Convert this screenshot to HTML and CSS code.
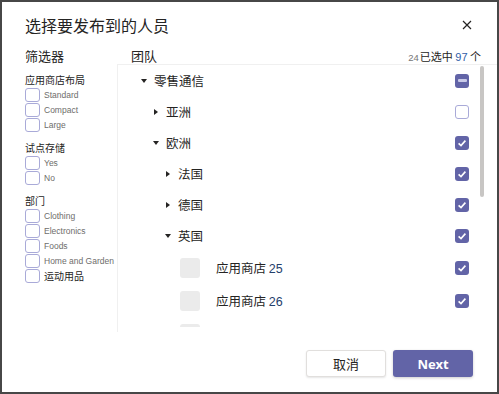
FILE: index.html
```html
<!DOCTYPE html>
<html lang="zh-CN">

<head>
   <meta charset="UTF-8">
   <meta name="viewport" content="width=device-width, initial-scale=1.0">
   <title>选择要发布到的人员</title>
   <link rel="stylesheet" href="styles.css">
</head>

<body>
   <div class="dialog">
      <div class="dialog-header">
         <h1 class="dialog-title">选择要发布到的人员</h1>
         <button class="close-btn" aria-label="关闭">
            <svg width="10" height="10" viewBox="0 0 10 10">
               <path d="M1 1 L9 9 M9 1 L1 9" stroke="#252423" stroke-width="1.2" fill="none" />
            </svg>
         </button>
      </div>

      <div class="dialog-body">
         <!-- Filters column -->
         <div class="filters">
            <div class="col-heading">筛选器</div>

            <div class="filter-group">
               <div class="group-title">应用商店布局</div>
               <label class="filter-row"><span class="box"></span>Standard</label>
               <label class="filter-row"><span class="box"></span>Compact</label>
               <label class="filter-row"><span class="box"></span>Large</label>
            </div>

            <div class="filter-group">
               <div class="group-title">试点存储</div>
               <label class="filter-row"><span class="box"></span>Yes</label>
               <label class="filter-row"><span class="box"></span>No</label>
            </div>

            <div class="filter-group">
               <div class="group-title">部门</div>
               <label class="filter-row"><span class="box"></span>Clothing</label>
               <label class="filter-row"><span class="box"></span>Electronics</label>
               <label class="filter-row"><span class="box"></span>Foods</label>
               <label class="filter-row"><span class="box"></span>Home and Garden</label>
               <label class="filter-row cjk"><span class="box"></span>运动用品</label>
            </div>
         </div>

         <!-- Teams column -->
         <div class="teams">
            <div class="teams-heading">
               <span class="col-heading">团队</span>
               <span class="counter"><span class="count-sel">24</span>已选中 <span class="count-all">97</span> 个</span>
            </div>

            <div class="tree-wrap">
               <div class="tree">
                  <div class="scrollbar"></div>

                  <div class="tree-row lvl-0">
                     <span class="caret down"></span><span class="name">零售通信</span>
                     <span class="check mixed"><span class="dash"></span></span>
                  </div>
                  <div class="tree-row lvl-1">
                     <span class="caret right"></span><span class="name">亚洲</span>
                     <span class="check"></span>
                  </div>
                  <div class="tree-row lvl-1">
                     <span class="caret down"></span><span class="name">欧洲</span>
                     <span class="check on"><svg width="14" height="14" viewBox="0 0 14 14"><path d="M3.6 7.3 L6 9.6 L10.4 4.6" /></svg></span>
                  </div>
                  <div class="tree-row lvl-2">
                     <span class="caret right"></span><span class="name">法国</span>
                     <span class="check on"><svg width="14" height="14" viewBox="0 0 14 14"><path d="M3.6 7.3 L6 9.6 L10.4 4.6" /></svg></span>
                  </div>
                  <div class="tree-row lvl-2">
                     <span class="caret right"></span><span class="name">德国</span>
                     <span class="check on"><svg width="14" height="14" viewBox="0 0 14 14"><path d="M3.6 7.3 L6 9.6 L10.4 4.6" /></svg></span>
                  </div>
                  <div class="tree-row lvl-2">
                     <span class="caret down"></span><span class="name">英国</span>
                     <span class="check on"><svg width="14" height="14" viewBox="0 0 14 14"><path d="M3.6 7.3 L6 9.6 L10.4 4.6" /></svg></span>
                  </div>
                  <div class="tree-row leaf">
                     <span class="thumb"></span><span class="name">应用商店 <span class="num">25</span></span>
                     <span class="check on"><svg width="14" height="14" viewBox="0 0 14 14"><path d="M3.6 7.3 L6 9.6 L10.4 4.6" /></svg></span>
                  </div>
                  <div class="tree-row leaf">
                     <span class="thumb"></span><span class="name">应用商店 <span class="num">26</span></span>
                     <span class="check on"><svg width="14" height="14" viewBox="0 0 14 14"><path d="M3.6 7.3 L6 9.6 L10.4 4.6" /></svg></span>
                  </div>
                  <div class="tree-row leaf">
                     <span class="thumb"></span>
                  </div>
               </div>
            </div>
         </div>
      </div>

      <div class="dialog-footer">
         <button class="btn btn-cancel">取消</button>
         <button class="btn btn-next">Next</button>
      </div>
   </div>
</body>

</html>
```

FILE: styles.css
```css
body {
   margin: 0;
   padding: 0;
   background-color: #fff;
   font-family: "Noto Sans", "Noto Sans CJK SC", sans-serif;
   color: #252423;
}

.dialog {
   width: 499px;
   height: 394px;
   box-sizing: border-box;
   border: 2px solid #474747;
   background-color: #fff;
   display: flex;
   flex-direction: column;
}

/* Header */

.dialog-header {
   height: 46px;
   display: flex;
   align-items: center;
   justify-content: space-between;
   padding: 0 25px 0 23px;
   box-sizing: border-box;
}

.dialog-title {
   margin: 0;
   font-family: "Noto Sans CJK SC", sans-serif;
   font-size: 16px;
   font-weight: normal;
   line-height: 22px;
}

.close-btn {
   border: none;
   background: none;
   padding: 0;
   width: 10px;
   height: 10px;
   display: flex;
   cursor: pointer;
}

/* Body */

.dialog-body {
   display: flex;
   height: 284px;
}

.col-heading {
   font-family: "Noto Sans CJK SC", sans-serif;
   font-size: 13px;
   line-height: 16px;
   height: 16px;
}

.filters {
   width: 115px;
   padding-left: 23px;
   box-sizing: border-box;
}

.filter-group {
   margin-top: 8px;
}

.group-title {
   font-family: "Noto Sans CJK SC", sans-serif;
   font-size: 10px;
   line-height: 15px;
}

.filter-row {
   display: flex;
   align-items: center;
   height: 15px;
   font-family: "Liberation Sans", sans-serif;
   font-size: 8.5px;
   color: #6e6d6b;
}

.filter-row.cjk {
   font-family: "Noto Sans CJK SC", sans-serif;
   font-size: 10px;
   color: #252423;
}

.box {
   width: 15px;
   height: 14px;
   box-sizing: border-box;
   border: 1.5px solid #a9aad8;
   border-radius: 3px;
   margin-right: 4px;
   flex-shrink: 0;
}

/* Teams */

.teams {
   flex: 1;
   display: flex;
   flex-direction: column;
}

.teams-heading {
   display: flex;
   justify-content: space-between;
   align-items: baseline;
   padding: 0 16px 0 14px;
   height: 16px;
}

.counter {
   font-family: "Noto Sans CJK SC", sans-serif;
   font-size: 11px;
   line-height: 16px;
}

.count-sel {
   font-family: "Liberation Sans", sans-serif;
   font-size: 9.5px;
   color: #767676;
   margin-right: 1px;
}

.count-all {
   font-family: "Liberation Sans", sans-serif;
   color: #2f5ea8;
}

.tree-wrap {
   height: 268px;
   border-top: 1px solid #f0f0f0;
   border-left: 1px solid #f0f0f0;
}

.tree {
   position: relative;
   height: 262px;
   overflow: hidden;
}

.scrollbar {
   position: absolute;
   right: 13px;
   top: 1px;
   width: 4px;
   height: 131px;
   border-radius: 2px;
   background-color: #c8c6c4;
}

.tree-row {
   display: flex;
   align-items: center;
   height: 31px;
   padding-right: 28px;
   font-family: "Noto Sans CJK SC", sans-serif;
   font-size: 12.5px;
}

.lvl-0 {
   padding-left: 23px;
}

.lvl-1 {
   padding-left: 35px;
}

.lvl-2 {
   padding-left: 47px;
}

.leaf {
   height: 33px;
   padding-left: 62px;
}

.caret {
   width: 13px;
   height: 6px;
   position: relative;
   flex-shrink: 0;
}

.caret::before {
   content: "";
   position: absolute;
   width: 0;
   height: 0;
}

.caret.down::before {
   left: 0;
   top: 1px;
   border-left: 3px solid transparent;
   border-right: 3px solid transparent;
   border-top: 4px solid #252423;
}

.caret.right::before {
   left: 1px;
   top: 0;
   border-top: 3px solid transparent;
   border-bottom: 3px solid transparent;
   border-left: 4px solid #252423;
}

.thumb {
   width: 20px;
   height: 20px;
   border-radius: 3px;
   background-color: #ebebeb;
   margin-right: 16px;
   flex-shrink: 0;
}

.num {
   font-family: "Liberation Sans", sans-serif;
   color: #24406b;
}

.check {
   margin-left: auto;
   width: 14px;
   height: 14px;
   box-sizing: border-box;
   border: 1.5px solid #a9aad8;
   border-radius: 3px;
   display: flex;
   align-items: center;
   justify-content: center;
   flex-shrink: 0;
}

.check.on,
.check.mixed {
   border: none;
   background-color: #6264a7;
}

.check svg path {
   fill: none;
   stroke: #fff;
   stroke-width: 1.6;
}

.dash {
   width: 9px;
   height: 3px;
   border-radius: 1px;
   background-color: #c9cae8;
}

/* Footer */

.dialog-footer {
   flex: 1;
   display: flex;
   justify-content: flex-end;
   align-items: flex-start;
   gap: 7px;
   padding: 18px 24px 0 0;
}

.btn {
   width: 80px;
   height: 27px;
   border-radius: 3px;
   font-size: 13px;
   cursor: pointer;
   padding: 0;
}

.btn-cancel {
   background-color: #fff;
   border: 1px solid #e1dfdd;
   box-shadow: 0 1px 2px rgba(0, 0, 0, 0.1);
   font-family: "Noto Sans CJK SC", sans-serif;
   color: #252423;
}

.btn-next {
   background-color: #6264a7;
   border: none;
   box-shadow: 0 1px 3px rgba(0, 0, 0, 0.2);
   font-family: "Noto Sans", sans-serif;
   font-weight: bold;
   color: #fff;
}
```
